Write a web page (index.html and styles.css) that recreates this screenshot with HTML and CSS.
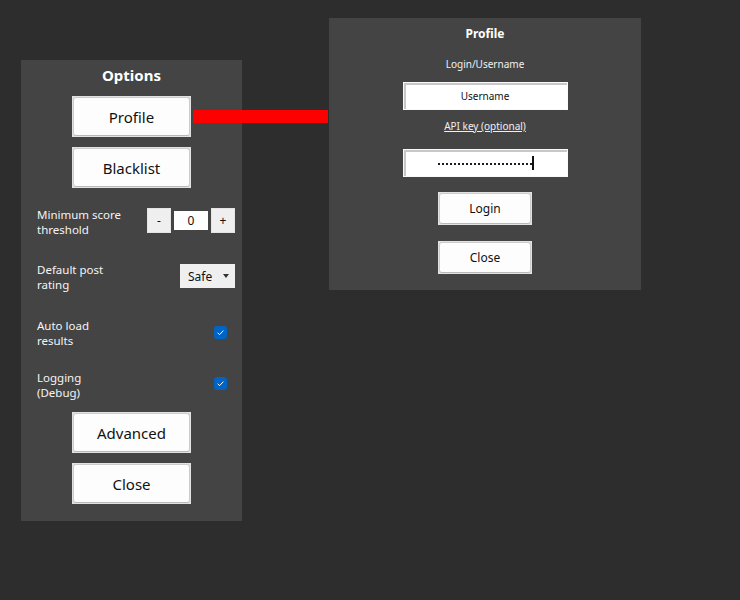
FILE: index.html
```html
<!DOCTYPE html>
<html>
<head>
<meta charset="utf-8">
<link rel="stylesheet" href="styles.css">
</head>
<body>
<div class="desktop">
  <section class="panel options">
    <h1 class="options-title">Options</h1>
    <button class="btn big first"><span>Profile</span></button>
    <button class="btn big gap"><span>Blacklist</span></button>

    <div class="row row1">
      <div class="label"><div>Minimum score</div><div>threshold</div></div>
      <div class="stepper">
        <span class="step">-</span>
        <span class="num">0</span>
        <span class="step">+</span>
      </div>
    </div>

    <div class="row row2">
      <div class="label"><div>Default post</div><div>rating</div></div>
      <div class="select"><span>Safe</span><span class="arrow"></span></div>
    </div>

    <div class="row row3">
      <div class="label"><div>Auto load</div><div>results</div></div>
      <span class="check cb3"><svg viewBox="0 0 13 13" width="13" height="13"><path d="M3.6 6.8 L5.6 8.6 L9.4 4.6" fill="none" stroke="#fff" stroke-width="1"/></svg></span>
    </div>

    <div class="row row4">
      <div class="label"><div>Logging</div><div>(Debug)</div></div>
      <span class="check cb4"><svg viewBox="0 0 13 13" width="13" height="13"><path d="M3.6 6.8 L5.6 8.6 L9.4 4.6" fill="none" stroke="#fff" stroke-width="1"/></svg></span>
    </div>

    <button class="btn big adv"><span>Advanced</span></button>
    <button class="btn big gap"><span>Close</span></button>
  </section>

  <section class="panel profile">
    <h2 class="profile-title">Profile</h2>
    <div class="small-label">Login/Username</div>
    <div class="field user">Username</div>
    <div class="small-label link">API key (optional)</div>
    <div class="field pass"><span class="dots"></span><span class="caret"></span></div>
    <button class="btn small login"><span>Login</span></button>
    <button class="btn small close2"><span>Close</span></button>
  </section>
</div>
<div class="connector"></div>
</body>
</html>
```

FILE: styles.css
```css
html, body {
  margin: 0;
  padding: 0;
}
body {
  background: #2d2d2d;
  width: 740px;
  height: 600px;
  font-family: "Noto Sans", "Open Sans", sans-serif;
  color: #f2f2f2;
  position: relative;
  overflow: hidden;
}
.desktop {
  display: flex;
  align-items: flex-start;
  padding: 18px 0 0 21px;
}
.panel {
  background: #444444;
  display: flex;
  flex-direction: column;
  box-sizing: border-box;
}
.options {
  width: 221px;
  margin-top: 42px;
  align-items: stretch;
  padding-bottom: 17px;
}
.options-title {
  margin: 0;
  padding-top: 5px;
  font-size: 15px;
  line-height: 20px;
  font-weight: 700;
  text-align: center;
  color: #fff;
}
.btn {
  position: relative;
  border: none;
  padding: 0;
  background: #e2e2e2;
  font-family: inherit;
  color: #111;
  display: flex;
  align-items: center;
  justify-content: center;
  align-self: center;
  cursor: default;
}
.btn::before {
  content: "";
  position: absolute;
  inset: 1px;
  background: #fdfdfd;
  border: 1px solid #cccccc;
  border-bottom-color: #b9b9b9;
  border-radius: 3px;
}
.btn span {
  position: relative;
}
.btn.big {
  width: 119px;
  height: 41px;
  font-size: 15px;
}
.btn.first { margin-top: 11px; }
.btn.gap { margin-top: 10px; }
.btn.adv { margin-top: 12px; }

.row {
  display: flex;
  justify-content: space-between;
  align-items: flex-start;
  margin-left: 16px;
  margin-right: 7px;
}
.label {
  font-size: 11.5px;
  line-height: 15px;
  color: #f4f4f4;
}
.label div {
  height: 15px;
}
.row1 { margin-top: 19px; }
.row2 { margin-top: 25px; }
.row3 { margin-top: 26px; }
.row4 { margin-top: 22px; }

.stepper {
  display: flex;
  align-items: center;
  gap: 3px;
  margin-top: 1px;
}
.step {
  width: 24px;
  height: 25px;
  box-sizing: border-box;
  background: #efefef;
  border: 1px solid #e4e4e4;
  color: #111;
  font-size: 12px;
  display: flex;
  align-items: center;
  justify-content: center;
}
.num {
  width: 34px;
  height: 19px;
  background: #fff;
  color: #111;
  font-size: 12px;
  display: flex;
  align-items: center;
  justify-content: center;
}
.select {
  width: 55px;
  height: 24px;
  box-sizing: border-box;
  margin-top: 2px;
  background: #efefef;
  color: #111;
  font-size: 12px;
  display: flex;
  align-items: center;
  justify-content: space-between;
  padding: 0 6px 0 8px;
}
.arrow {
  width: 0;
  height: 0;
  border-left: 3.5px solid transparent;
  border-right: 3.5px solid transparent;
  border-top: 4px solid #333;
}
.check {
  width: 13px;
  height: 13px;
  background: #0063c6;
  border-radius: 3px;
  margin-right: 8px;
  display: block;
}
.check svg { display: block; }
.cb3 { margin-top: 8px; }
.cb4 { margin-top: 7px; }

.profile {
  width: 312px;
  height: 272px;
  margin-left: 87px;
  align-items: center;
}
.profile-title {
  margin: 0;
  padding-top: 8px;
  font-size: 12px;
  line-height: 16px;
  font-weight: 700;
  color: #fff;
}
.small-label {
  font-size: 10px;
  line-height: 14px;
  margin-top: 15px;
  color: #f0f0f0;
}
.small-label.link {
  margin-top: 9px;
  text-decoration: underline;
}
.field {
  width: 165px;
  height: 28px;
  box-sizing: border-box;
  background: #fff;
  border: 1px solid #fafafa;
  box-shadow: inset 2px 2px 0 #c8c8c8;
  margin-top: 11px;
  display: flex;
  align-items: center;
  justify-content: center;
  color: #111;
  font-size: 10px;
}
.field.pass {
  margin-top: 16px;
  gap: 0;
  padding-left: 2px;
}
.dots {
  width: 94px;
  height: 2px;
  background: repeating-linear-gradient(to right, #1a1a2a 0 2px, transparent 2px 4px);
  margin-top: 1px;
}
.caret {
  width: 2px;
  height: 14px;
  background: #111;
}
.btn.small {
  width: 94px;
  height: 33px;
  font-size: 12px;
}
.btn.login { margin-top: 15px; }
.btn.close2 { margin-top: 16px; }

.connector {
  position: absolute;
  left: 193px;
  top: 110px;
  width: 135px;
  height: 13px;
  background: #ff0000;
}
```
